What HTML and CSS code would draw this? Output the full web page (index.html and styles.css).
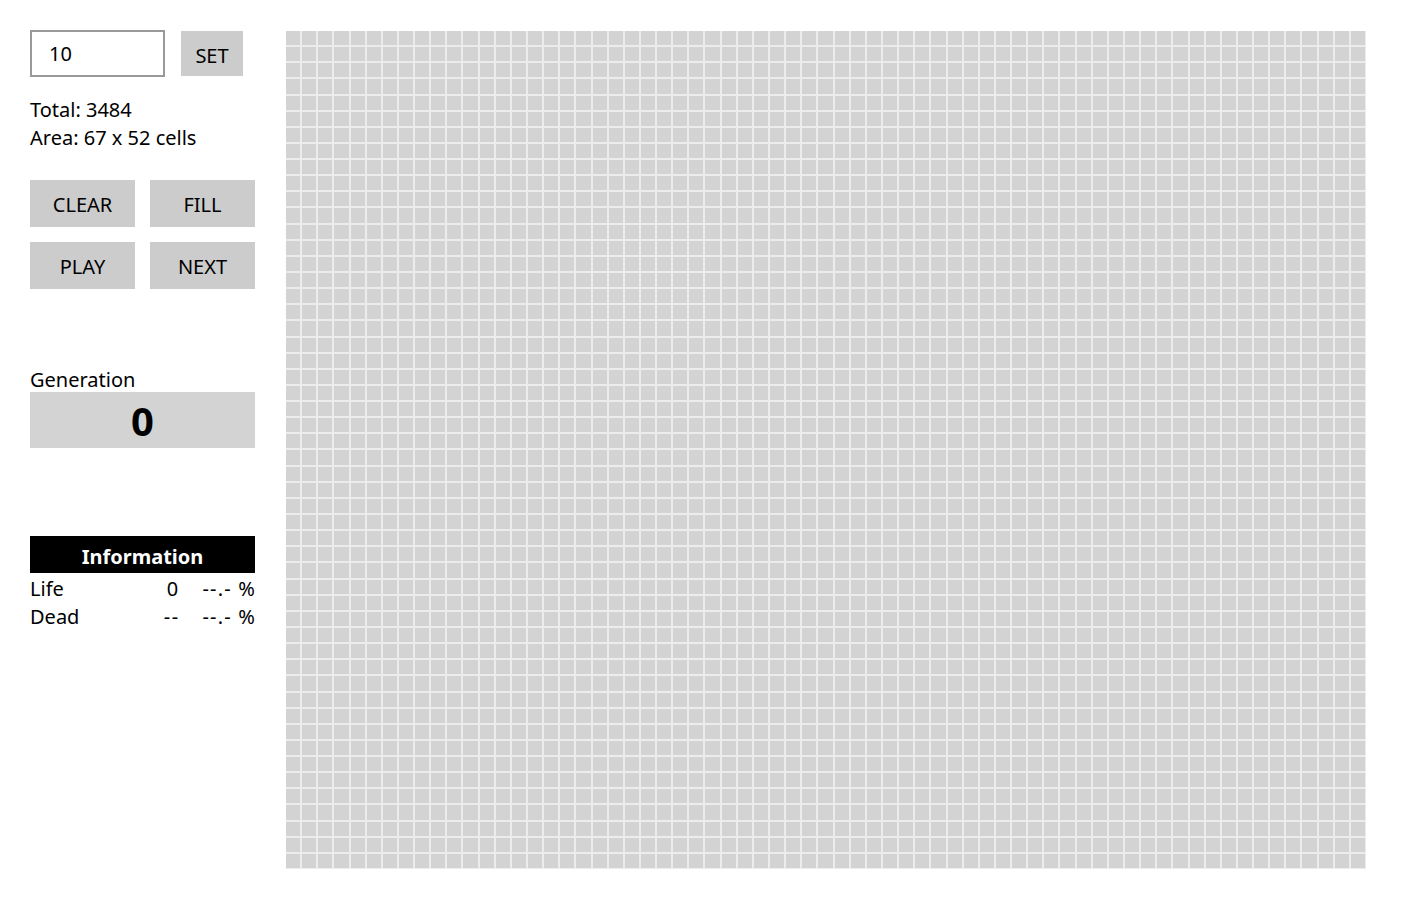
FILE: index.html
```html
<!DOCTYPE html>
<html lang="en">
<head>
  <meta charset="UTF-8" />
  <meta name="viewport" content="width=device-width, initial-scale=1.0"/>
  <title>Game of Life</title>
  <link rel="stylesheet" href="styles.css">
</head>
<body>

  <div class="app">
    <aside class="panel">
      <div class="size-row">
        <input type="text" id="size" class="size-input" value="10" />
        <button class="btn btn-set">SET</button>
      </div>

      <div class="stats">
        <div>Total: <span id="total">3484</span></div>
        <div>Area: <span id="cols">67</span> x <span id="rows">52</span> cells</div>
      </div>

      <div class="controls">
        <button class="btn">CLEAR</button>
        <button class="btn">FILL</button>
        <button class="btn">PLAY</button>
        <button class="btn">NEXT</button>
      </div>

      <div class="generation">
        <div class="generation-label">Generation</div>
        <div class="generation-value" id="generation">0</div>
      </div>

      <div class="info">
        <div class="info-title">Information</div>
        <div class="info-row">
          <span class="info-name">Life</span>
          <span class="info-count">0</span>
          <span class="info-pct">--.- %</span>
        </div>
        <div class="info-row">
          <span class="info-name">Dead</span>
          <span class="info-count">--</span>
          <span class="info-pct">--.- %</span>
        </div>
      </div>
    </aside>

    <main class="board" id="board"></main>
  </div>

  <script>
    const cols = 67;
    const rows = 52;

    function renderBoard() {
      const board = document.getElementById("board");
      let html = "";
      for (let i = 0; i < cols * rows; i++) {
        html += '<div class="cell"></div>';
      }
      board.innerHTML = html;
    }

    renderBoard();
  </script>

</body>
</html>
```

FILE: styles.css
```css
* {
  box-sizing: border-box;
}

body {
  margin: 0;
  padding: 0;
  background: #ffffff;
  font-family: 'Noto Sans', 'Open Sans', sans-serif;
  font-size: 20px;
  color: #000;
}

.app {
  display: flex;
  gap: 31px;
  padding: 30px 0 0 30px;
}

.panel {
  width: 225px;
  flex-shrink: 0;
}

.size-row {
  display: flex;
  gap: 16px;
  align-items: center;
}

.size-input {
  width: 135px;
  height: 47px;
  border: 2px solid #999;
  padding: 0 0 0 17px;
  font-family: inherit;
  font-size: 20px;
  outline: none;
}

.btn {
  background: #cccccc;
  border: none;
  font-family: inherit;
  font-size: 20px;
  color: #000;
  height: 47px;
  padding: 2px 0 0;
  cursor: pointer;
}

.btn-set {
  width: 62px;
  height: 45px;
  padding-top: 4px;
}

.stats {
  margin-top: 19px;
  line-height: 28px;
}

.controls {
  display: grid;
  grid-template-columns: 105px 105px;
  gap: 15px;
  margin-top: 28px;
}

.generation {
  margin-top: 75px;
}

.generation-label {
  line-height: 28px;
  padding-top: 2px;
  margin-bottom: -2px;
}

.generation-value {
  height: 56px;
  background: #d3d3d3;
  text-align: center;
  font-size: 40px;
  font-weight: bold;
  line-height: 58px;
}

.info {
  margin-top: 88px;
}

.info-title {
  background: #000;
  color: #fff;
  font-weight: bold;
  text-align: center;
  height: 37px;
  line-height: 41px;
}

.info-row {
  display: flex;
  line-height: 28px;
  padding-top: 2px;
  margin-bottom: -2px;
}

.info-name {
  flex: 1;
}

.info-count {
  width: 60px;
  text-align: right;
  letter-spacing: 1.5px;
  margin-right: -1.5px;
}

.info-pct {
  width: 78px;
  text-align: right;
  letter-spacing: 1.2px;
  margin-right: -1.2px;
}

.board {
  display: grid;
  grid-template-columns: repeat(67, 1fr);
  grid-template-rows: repeat(52, 1fr);
  gap: 2px;
  width: 1080px;
  height: 838px;
  margin-top: 1px;
  padding: 0 1px 1px 0;
  background: #ececec;
}

.cell {
  background: #d3d3d3;
}
```
